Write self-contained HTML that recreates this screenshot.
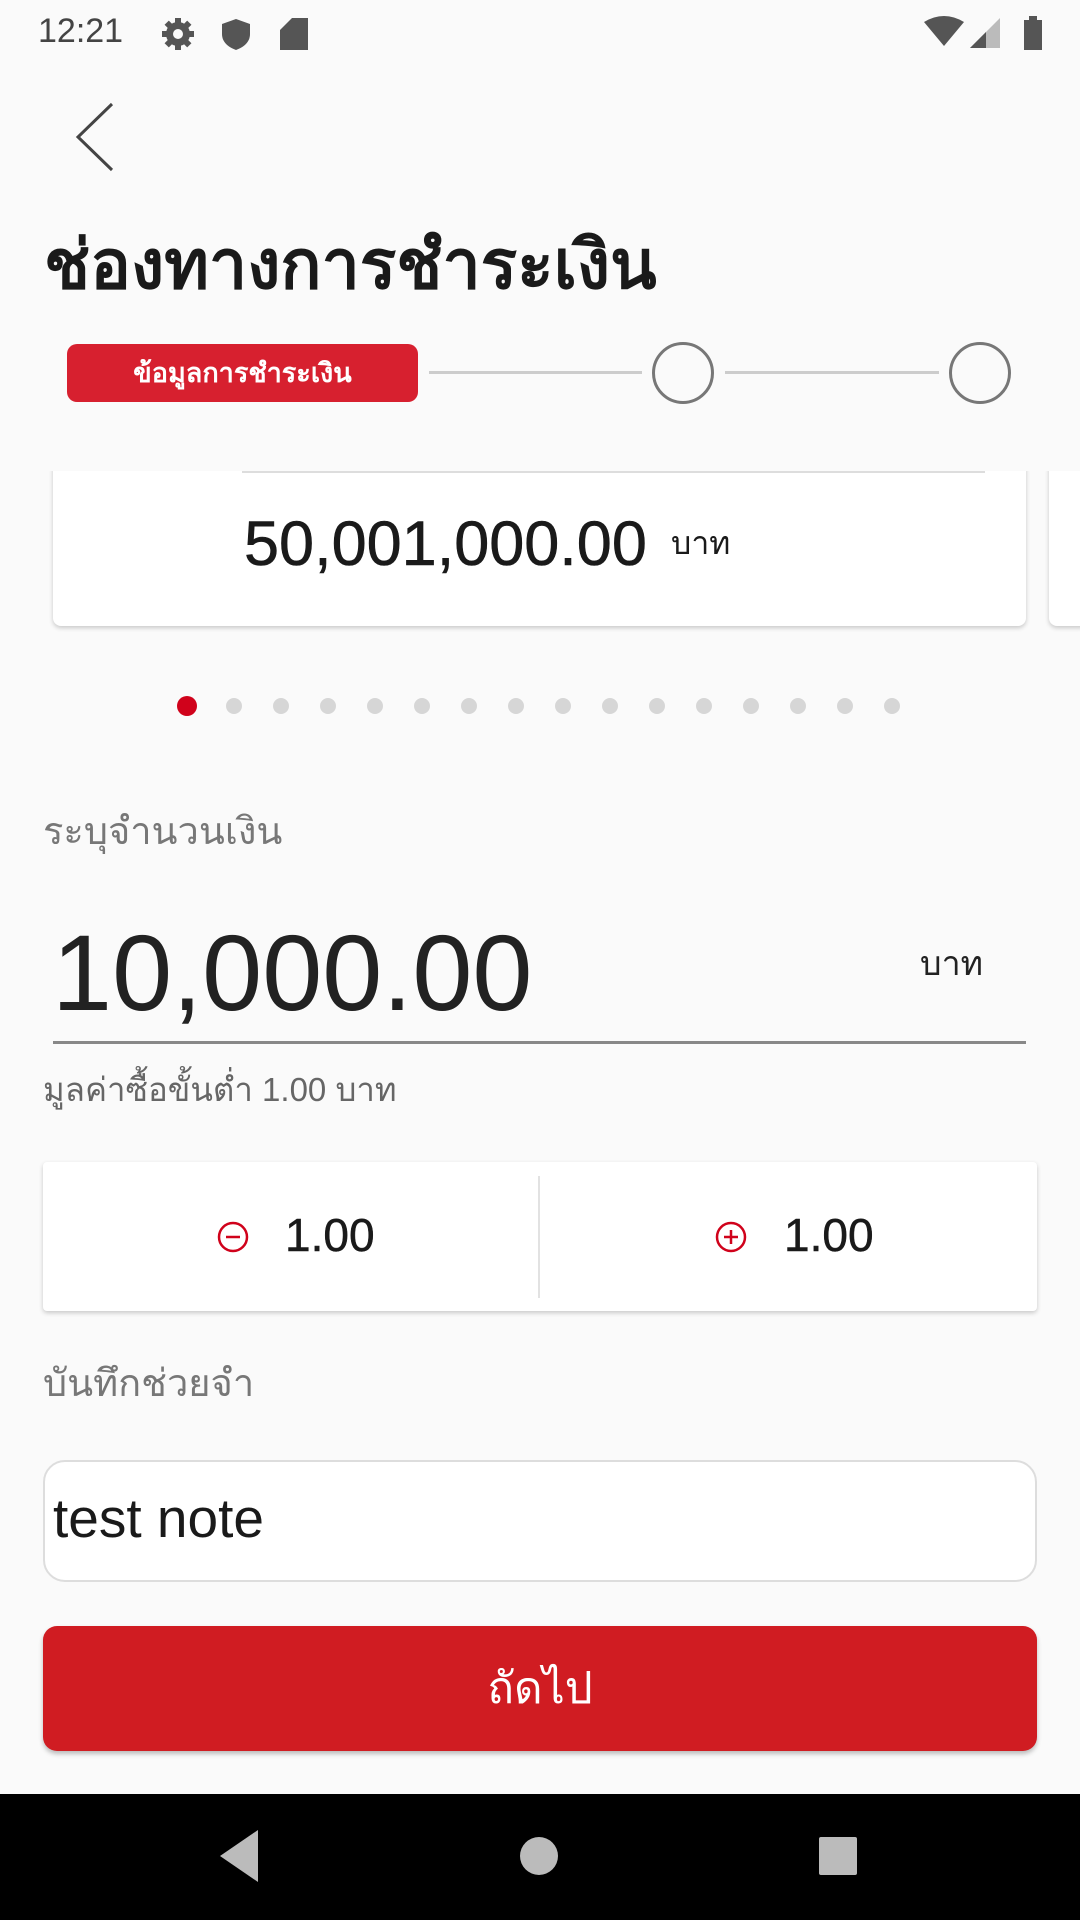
<!DOCTYPE html>
<html><head><meta charset="utf-8">
<style>
*{margin:0;padding:0;box-sizing:border-box}
body{width:1080px;height:1920px;background:#fafafa;position:relative;overflow:hidden;font-family:"Liberation Sans","DejaVu Sans","Noto Sans CJK SC",sans-serif;color:#222}
.a{position:absolute}
</style></head><body>
<!-- status bar -->
<div class="a" style="left:38px;top:12px;font-size:34px;color:#444;">12:21</div>
<svg class="a" style="left:158px;top:14px" width="160" height="40" viewBox="0 0 160 40">
<g fill="#555">
<circle cx="20" cy="20" r="12"/>
<rect x="17" y="4" width="6" height="32"/><rect x="4" y="17" width="32" height="6"/>
<rect x="17" y="4" width="6" height="32" transform="rotate(45 20 20)"/><rect x="17" y="4" width="6" height="32" transform="rotate(-45 20 20)"/>
<circle cx="20" cy="20" r="5" fill="#fafafa"/>
<path d="M78 5 L92 10 L92 20 C92 28 86 33 78 36 C70 33 64 28 64 20 L64 10 Z"/>
<path d="M134 4 L150 4 L150 36 L122 36 L122 16 Z"/>
</g></svg>
<svg class="a" style="left:920px;top:14px" width="126" height="36" viewBox="0 0 126 36">
<path d="M4 8 Q24 -4 44 8 L24 32 Z" fill="#555"/>
<path d="M50 34 L80 4 L80 34 Z" fill="#bbb"/><path d="M50 34 L66 18 L66 34 Z" fill="#555"/>
<rect x="104" y="6" width="18" height="30" fill="#555"/><rect x="109" y="2" width="8" height="5" fill="#555"/>
</svg>
<!-- back -->
<svg class="a" style="left:70px;top:100px" width="50" height="74" viewBox="0 0 50 74"><path d="M42 4 L8 37 L42 70" fill="none" stroke="#444" stroke-width="3"/></svg>
<div class="a" style="left:44px;top:210px;font-size:68px;font-weight:bold;color:#1a1a1a;">ช่องทางการชำระเงิน</div>
<!-- stepper -->
<div class="a" style="left:67px;top:344px;width:351px;height:58px;background:#d7202f;border-radius:10px;color:#fff;font-size:27px;font-weight:bold;text-align:center;line-height:58px;">ข้อมูลการชำระเงิน</div>
<div class="a" style="left:429px;top:371px;width:213px;height:3px;background:#ccc"></div>
<div class="a" style="left:652px;top:342px;width:62px;height:62px;border:3px solid #777;border-radius:50%"></div>
<div class="a" style="left:725px;top:371px;width:214px;height:3px;background:#ccc"></div>
<div class="a" style="left:949px;top:342px;width:62px;height:62px;border:3px solid #777;border-radius:50%"></div>
<!-- card -->
<div class="a" style="left:53px;top:460px;width:973px;height:166px;background:#fff;border-radius:8px;box-shadow:0 2px 5px rgba(0,0,0,.2)"></div>
<div class="a" style="left:1049px;top:460px;width:40px;height:166px;background:#fff;border-radius:8px;box-shadow:0 2px 5px rgba(0,0,0,.2)"></div>
<div class="a" style="left:0;top:440px;width:1080px;height:31px;background:#fafafa"></div>
<div class="a" style="left:242px;top:471px;width:743px;height:2px;background:#ddd"></div>
<div class="a" style="left:244px;top:508px;font-size:63px;color:#1a1a1a;-webkit-text-stroke:0.6px #1a1a1a;">50,001,000.00</div>
<div class="a" style="left:671px;top:518px;font-size:32px;color:#1a1a1a;">บาท</div>
<!-- dots -->
<svg class="a" style="left:0;top:690px" width="1080" height="32">
<circle cx="187" cy="16" r="10" fill="#d0021b"/>
<g fill="#d6d6d6">
<circle cx="234" cy="16" r="8"/><circle cx="281" cy="16" r="8"/><circle cx="328" cy="16" r="8"/><circle cx="375" cy="16" r="8"/><circle cx="422" cy="16" r="8"/><circle cx="469" cy="16" r="8"/><circle cx="516" cy="16" r="8"/><circle cx="563" cy="16" r="8"/><circle cx="610" cy="16" r="8"/><circle cx="657" cy="16" r="8"/><circle cx="704" cy="16" r="8"/><circle cx="751" cy="16" r="8"/><circle cx="798" cy="16" r="8"/><circle cx="845" cy="16" r="8"/><circle cx="892" cy="16" r="8"/>
</g></svg>
<div class="a" style="left:43px;top:800px;font-size:38px;color:#777;">ระบุจำนวนเงิน</div>
<div class="a" style="left:52px;top:910px;font-size:108px;color:#222;">10,000.00</div>
<div class="a" style="left:920px;top:936px;font-size:34px;color:#222;">บาท</div>
<div class="a" style="left:53px;top:1041px;width:973px;height:3px;background:#888"></div>
<div class="a" style="left:43px;top:1063px;font-size:33px;color:#666;">มูลค่าซื้อขั้นต่ำ 1.00 บาท</div>
<!-- +/- box -->
<div class="a" style="left:43px;top:1162px;width:994px;height:149px;background:#fff;border-radius:4px;box-shadow:0 2px 5px rgba(0,0,0,.2)"></div>
<div class="a" style="left:538px;top:1176px;width:2px;height:122px;background:#e2e2e2"></div>
<svg class="a" style="left:216px;top:1220px" width="34" height="34"><circle cx="17" cy="17" r="14" fill="none" stroke="#d0021b" stroke-width="2.5"/><path d="M10 17 H24" stroke="#d0021b" stroke-width="2.5"/></svg>
<div class="a" style="left:285px;top:1208px;font-size:46px;color:#1a1a1a;-webkit-text-stroke:0.5px #1a1a1a;">1.00</div>
<svg class="a" style="left:714px;top:1220px" width="34" height="34"><circle cx="17" cy="17" r="14" fill="none" stroke="#d0021b" stroke-width="2.5"/><path d="M10 17 H24 M17 10 V24" stroke="#d0021b" stroke-width="2.5"/></svg>
<div class="a" style="left:784px;top:1208px;font-size:46px;color:#1a1a1a;-webkit-text-stroke:0.5px #1a1a1a;">1.00</div>
<div class="a" style="left:43px;top:1352px;font-size:38px;color:#777;">บันทึกช่วยจำ</div>
<div class="a" style="left:43px;top:1460px;width:994px;height:122px;background:#fff;border:2px solid #ddd;border-radius:22px"></div>
<div class="a" style="left:53px;top:1486px;font-size:55px;color:#1a1a1a;">test note</div>
<div class="a" style="left:43px;top:1626px;width:994px;height:125px;background:#d01c22;border-radius:14px;box-shadow:0 3px 5px rgba(0,0,0,.25);color:#fff;font-size:44px;text-align:center;line-height:125px;">ถัดไป</div>
<!-- nav -->
<div class="a" style="left:0;top:1794px;width:1080px;height:126px;background:#000"></div>
<svg class="a" style="left:0;top:1794px" width="1080" height="126">
<path d="M258 36 L258 88 L220 62 Z" fill="#bbb"/>
<circle cx="539" cy="62" r="19" fill="#bbb"/>
<rect x="819" y="43" width="38" height="38" rx="2" fill="#bbb"/>
</svg>
</body></html>
